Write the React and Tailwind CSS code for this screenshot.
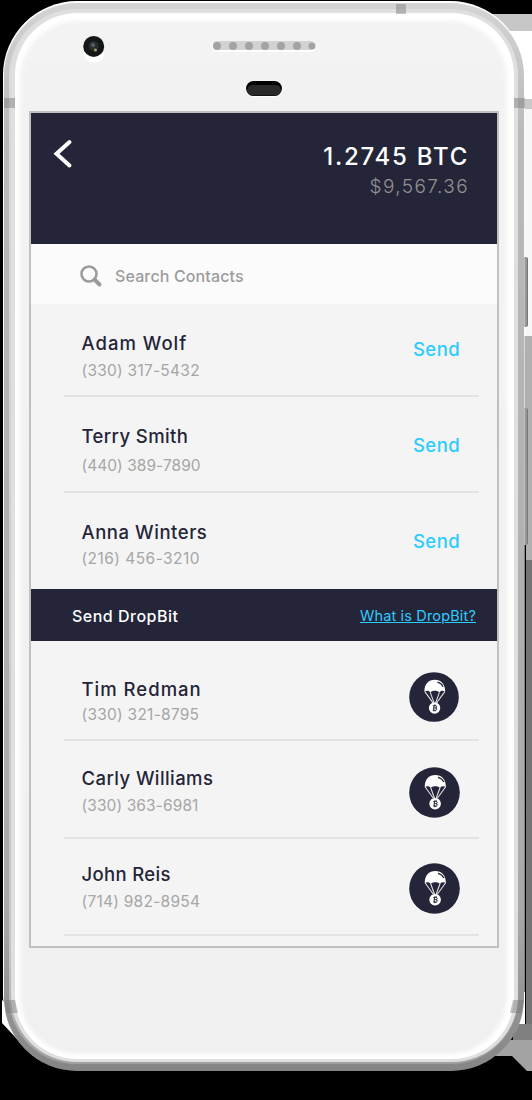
const people = [
  { name: "Adam Wolf", phone: "(330) 317-5432", h: "h-[93px]", top: "pt-[26px]", gap: "mt-[4px]", act: "pt-[32px]", nt: "tracking-[1px]", pt: "tracking-[0.25px]" },
  { name: "Terry Smith", phone: "(440) 389-7890", h: "h-[96px]", top: "pt-[26px]", gap: "mt-[6px]", act: "pt-[35px]", nt: "tracking-[0.4px]", pt: "tracking-[0.04px]" },
  { name: "Anna Winters", phone: "(216) 456-3210", h: "h-[96px]", top: "pt-[26px]", gap: "mt-[3px]", act: "pt-[35px]", nt: "tracking-[0.55px]", pt: "tracking-[0.45px]", last: true },
];
const drops = [
  { name: "Tim Redman", phone: "(330) 321-8795", h: "h-[100px]", top: "pt-[35px]", gap: "mt-[2px]", act: "pt-[31px]", size: "size-[50px] mr-[1px]", nt: "tracking-[1px]", pt: "tracking-[0.25px]" },
  { name: "Carly Williams", phone: "(330) 363-6981", h: "h-[98px]", top: "pt-[24px]", gap: "mt-[4px]", act: "pt-[26px]", size: "size-[51px]", nt: "tracking-[0.42px]", pt: "tracking-[0.1px]" },
  { name: "John Reis", phone: "(714) 982-8954", h: "h-[97px]", top: "pt-[22px]", gap: "mt-[4px]", act: "pt-[24px]", size: "size-[51px]", nt: "tracking-[0.35px]", pt: "tracking-[0.25px]" },
];

function DropIcon({ className }) {
  return (
    <svg className={className} viewBox="0 0 51 51">
      <circle cx="25.5" cy="25.5" r="25.3" fill="#242538" />
      <path d="M15.8 20.5C15.3 12.5 20 8 26.3 8S37.2 12.5 36.9 20.5C35 18.7 32.5 18.7 31 21C29.5 18.6 23.2 18.6 21.7 21C20.2 18.7 17.5 18.7 15.8 20.5Z" fill="#fff" />
      <path d="M29 10.3C31.8 11 33.8 12.7 34.8 15" fill="none" stroke="#242538" strokeWidth="1.2" />
      <path d="M16.2 20L24.5 31.5M21.7 20.8L25.6 31.5M31 20.8L27.1 31.5M36.5 20L28.2 31.5" fill="none" stroke="#fff" strokeOpacity="0.85" strokeWidth="1.1" />
      <circle cx="26.1" cy="36.7" r="5.8" fill="#fff" />
      <path d="M24.3 34.4H26.8Q28.3 34.4 28.2 35.5Q28.1 36.6 26.8 36.6H25.2M26.8 36.6Q28.5 36.7 28.3 38Q28.1 39 26.7 39H24.2M25.5 34.4L25 39M26 33.3V34.4M27.2 33.3V34.4M25.5 39V40.1M26.8 39V40.1" fill="none" stroke="#242538" strokeWidth="1" />
    </svg>
  );
}

function Hardware() {
  return (
    <svg className="absolute inset-0" width="532" height="1100" viewBox="0 0 532 1100">
      <defs>
        <linearGradient id="rim" x1="0" y1="0" x2="0" y2="1">
          <stop offset="0" stopColor="#d4d4d4" />
          <stop offset="0.12" stopColor="#bababa" />
          <stop offset="0.85" stopColor="#a9a9a9" />
          <stop offset="1" stopColor="#858585" />
        </linearGradient>
        <linearGradient id="rim2" x1="0" y1="0" x2="0" y2="1">
          <stop offset="0" stopColor="#dcdcdc" />
          <stop offset="0.9" stopColor="#c4c4c4" />
          <stop offset="1" stopColor="#a0a0a0" />
        </linearGradient>
        <linearGradient id="face" x1="0" y1="0" x2="0" y2="1">
          <stop offset="0" stopColor="#f3f3f3" />
          <stop offset="1" stopColor="#f0f0f0" />
        </linearGradient>
        <linearGradient id="key" x1="0" y1="0" x2="1" y2="0">
          <stop offset="0.5" stopColor="#707070" />
          <stop offset="0.75" stopColor="#a4a4a4" />
          <stop offset="1" stopColor="#686868" />
        </linearGradient>
        <filter id="soft" x="-5%" y="-5%" width="110%" height="110%"><feGaussianBlur stdDeviation="2" /></filter>
      </defs>
      <rect width="532" height="1100" fill="#000" />
      <rect x="480" y="14" width="52" height="18" fill="#c7c7c7" />
      <rect x="500" y="31" width="32" height="306" fill="#fff" />
      <rect x="520" y="99" width="12" height="10" fill="#c9c9c9" />
      <rect x="520" y="109" width="12" height="227" fill="#f7f7f7" />
      <rect x="520" y="336" width="12" height="225" fill="#b0b0b0" />
      <rect x="520" y="545" width="6" height="500" fill="#000" />
      <rect x="526" y="560" width="6" height="465" fill="#747474" />
      <path d="M485 1040H532V1071H527L512 1056H485Z" fill="#a3a3a3" />
      <rect x="513" y="1024" width="19" height="16" fill="#808080" />
      <path d="M520 992H525V1024H518Z" fill="#fff" />
      <path d="M2 1000V1023L33 1056L40 1040Z" fill="#fff" />
      <rect x="520" y="257" width="8" height="70" rx="2" fill="url(#key)" />
      <rect x="520" y="408" width="8" height="137" rx="2" fill="url(#key)" />
      <rect x="3" y="1" width="521.5" height="1069" rx="74" fill="#fff" />
      <rect x="4" y="3" width="520" height="1068" rx="73" fill="url(#rim)" />
      <rect x="9" y="9" width="509" height="1055" rx="67" fill="url(#rim2)" />
      <rect x="11" y="10" width="507" height="1052" rx="66" fill="#dfdfdf" />
      <rect x="15" y="13" width="499" height="1046" rx="62" fill="#fff" />
      <rect x="20" y="21" width="487" height="1033" rx="58" fill="url(#face)" filter="url(#soft)" />
      <g fill="#777" fillOpacity="0.45">
        <rect x="4" y="98" width="11" height="10" />
        <rect x="514" y="98" width="11" height="10" />
        <path d="M4 1000H15L18 1013H7Z" />
        <path d="M524 1000H513L510 1013H521Z" />
        <rect x="396" y="4" width="10" height="10" />
      </g>
      <circle cx="94" cy="52" r="10.5" fill="#fff" />
      <circle cx="93.7" cy="46.4" r="10.5" fill="#151717" />
      <circle cx="93.7" cy="46" r="5" fill="#282e30" />
      <circle cx="93" cy="45" r="2" fill="#526065" />
      <circle cx="95.5" cy="50" r="1.5" fill="#9aa35f" />
      <rect x="212" y="41" width="104" height="11" rx="5.5" fill="#fff" />
      <rect x="213" y="41" width="102" height="9" rx="4.5" fill="#d2d2d2" />
      <g fill="#a3a3a3">
        <circle cx="217" cy="46" r="4" /><circle cx="233" cy="46" r="4" /><circle cx="249" cy="46" r="4" />
        <circle cx="265" cy="46" r="4" /><circle cx="281" cy="46" r="4" /><circle cx="297" cy="46" r="4" /><circle cx="312" cy="46" r="3.5" />
      </g>
      <rect x="245" y="81" width="38" height="16" rx="8" fill="#fff" />
      <rect x="246" y="81" width="36" height="15" rx="7.5" fill="#000" />
      <rect x="247" y="85" width="34" height="10.5" rx="5.2" fill="#292929" />
    </svg>
  );
}

function Row({ p, children }) {
  return (
    <div className={`${p.h} ml-[33px] mr-[18px] flex shrink-0 justify-between pl-[17.5px] pr-[19px] ${p.last ? "" : "border-b-2 border-[#e3e3e3]"}`}>
      <div className={`${p.top} whitespace-nowrap`}>
        <div className={`text-[18.5px] leading-[26px] font-medium text-[#242538] ${p.nt}`}>{p.name}</div>
        <div className={`${p.gap} text-[15.5px] leading-[22px] text-[#a6a6a6] ${p.pt}`}>{p.phone}</div>
      </div>
      <div className={p.act}>{children}</div>
    </div>
  );
}

export default function App() {
  return (
    <div className="relative h-[1100px] w-[532px] overflow-hidden bg-black font-['Inter',sans-serif]">
      <Hardware />
      <div className="relative pt-[111px] pl-[29px]">
        <main className="flex h-[837px] w-[470px] flex-col border-2 border-[#c0c0c0] bg-[#f4f4f4]">
          <header className="flex h-[131px] shrink-0 justify-between bg-[#242538] pt-[26px] pr-[28px] pl-[21px]">
            <svg width="21" height="30" viewBox="0 0 21 30">
              <path d="M17.5 3L4.5 14.7L17.5 26.5" fill="none" stroke="#fff" strokeWidth="4" strokeLinecap="round" />
            </svg>
            <div className="text-right whitespace-nowrap">
              <div className="text-[24px] leading-[36px] font-medium text-white tracking-[1.75px]">1.2745 BTC</div>
              <div className="text-[19px] leading-[24px] font-light text-[#929292] tracking-[1.4px]">$9,567.36</div>
            </div>
          </header>
          <div className="flex h-[60px] shrink-0 items-center bg-[#fbfbfb] pt-[4px] pl-[49px]">
            <svg width="23" height="23" viewBox="0 0 23 23" fill="none" stroke="#9b9b9b">
              <circle cx="9" cy="9" r="7.5" strokeWidth="2.6" />
              <path d="M14.5 14.5L19.5 19.5" strokeWidth="4" strokeLinecap="round" />
            </svg>
            <span className="ml-[12px] text-[16px] font-medium text-[#9b9b9b] tracking-[0.13px]">Search Contacts</span>
          </div>
          {people.map((p) => (
            <Row key={p.name} p={p}>
              <button className="block text-[18.5px] leading-[26px] font-medium text-[#2dccff] tracking-[0.4px]">Send</button>
            </Row>
          ))}
          <div className="flex h-[52px] shrink-0 items-center justify-between bg-[#242538] pt-[2px] pr-[21px] pl-[41px]">
            <span className="text-[16px] font-medium text-white tracking-[0.5px]">Send DropBit</span>
            <a className="text-[14.5px] text-[#2dccff] underline tracking-[0.16px]">What is DropBit?</a>
          </div>
          {drops.map((p) => (
            <Row key={p.name} p={p}>
              <DropIcon className={p.size} />
            </Row>
          ))}
        </main>
      </div>
    </div>
  );
}
